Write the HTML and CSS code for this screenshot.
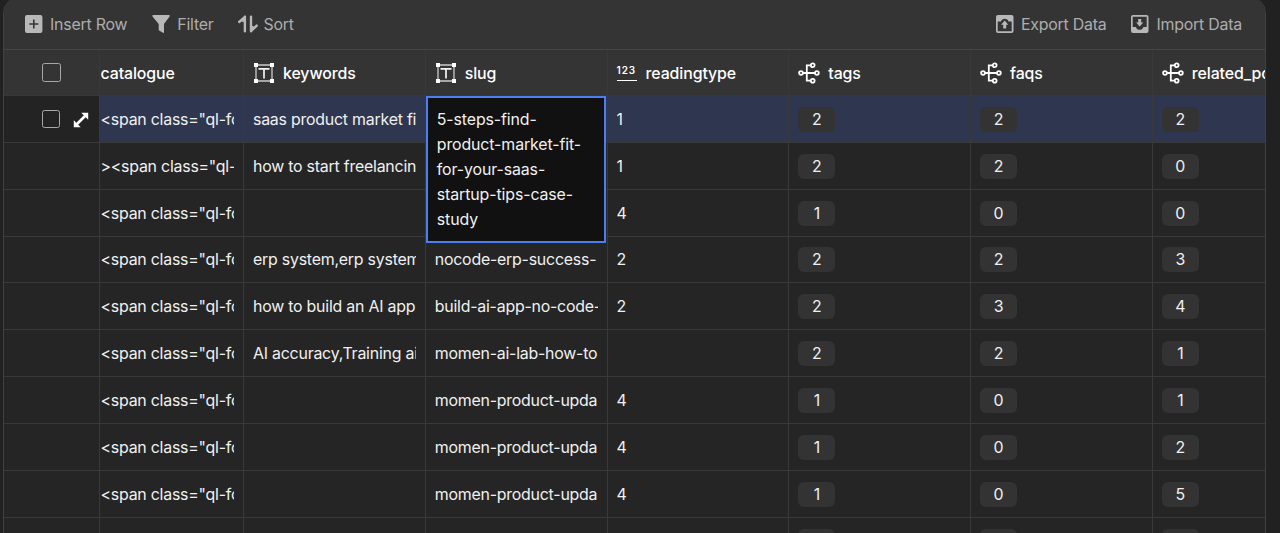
FILE: index.html
```html
<!DOCTYPE html>
<html lang="en">
<head>
<meta charset="utf-8">
<title>Data table</title>
<link rel="stylesheet" href="styles.css">
</head>
<body>
<svg class="defs" aria-hidden="true">
  <symbol id="text" viewBox="0 0 22 22"><path d="M3 3h16v16H3z" fill="none" stroke="#ccc" stroke-width="1.3"/><path d="M1 1h4v4H1zM17 1h4v4h-4zM1 17h4v4H1zM17 17h4v4h-4z" fill="#fff"/><path d="M5.500 6.800h11M11 6.800V16.500" fill="none" stroke="#f4f4f4" stroke-width="1.7"/></symbol>
  <symbol id="rel" viewBox="0 0 22 22"><g fill="none" stroke="#fff" stroke-width="1.8"><path d="M5 11h12M12.500 3.300H8.800v15.400h3.700"/><circle cx="3" cy="11" r="1.900"/><circle cx="18.900" cy="11" r="1.900"/><circle cx="14.700" cy="3.300" r="1.900"/><circle cx="14.700" cy="18.700" r="1.900"/></g></symbol>
</svg>
<main class="panel">
  <header class="toolbar">
    <div class="tool insert"><svg width="18" height="18" viewBox="0 0 18 18"><rect width="17.4" height="18" rx="2" fill="#b8b8b8"/><path d="M8.8 4.5v9M4.3 9h9" stroke="#343434" stroke-width="1.6"/></svg><span>Insert Row</span></div>
    <div class="tool filter"><svg width="18" height="20" viewBox="0 0 18 20"><path d="M1 1h16q1 0 .6 1.4L12 10v8.2q0 1.1-1 .5L6.700 16.300V10L.5 2.400Q0 1 1 1Z" fill="#b8b8b8"/></svg><span>Filter</span></div>
    <div class="tool sort"><svg width="20" height="18" viewBox="0 0 20 18"><path d="M1.200 7 6.900 1.800V16.200M6.900 1.800V6.500L4.500 5.500M13 1.800V16.200L18.700 10.600M13 16.200V11.500L15.500 12.500" fill="none" stroke="#b8b8b8" stroke-width="2.400" stroke-linecap="round" stroke-linejoin="round"/></svg><span>Sort</span></div>
    <div class="tool export"><svg width="18" height="18" viewBox="0 0 18 18"><path fill="#b8b8b8" fill-rule="evenodd" d="M2 0h13.500q2 0 2 2v14q0 2-2 2H2q-2 0-2-2V2Q0 0 2 0ZM1.700 6.500v9.700h14V6.500h-3.200a3.900 3.900 0 0 0-7.500 0Z"/><path d="m8.700 5.500 3.600 4.300h-2.100V13.500h-3V9.800H5.100Z" fill="#b8b8b8"/></svg><span>Export Data</span></div>
    <div class="tool import"><svg width="18" height="18" viewBox="0 0 18 18"><path fill="#b8b8b8" fill-rule="evenodd" d="M2 0h13.500q2 0 2 2v14q0 2-2 2H2q-2 0-2-2V2Q0 0 2 0ZM1.700 1.700V12h3.200a3.900 3.900 0 0 0 7.500 0h3.300V1.700Z"/><path d="m8.700 11.500 3.600-4h-2.100V4h-3v3.500H5.100Z" fill="#b8b8b8"/></svg><span>Import Data</span></div>
  </header>
  <section class="table" id="table">
    <div class="row head">
      <div class="cell select"><i class="box"></i></div>
      <div class="cell catalogue"><span class="clip">catalogue</span></div>
      <div class="cell"><svg class="type"><use href="#text"/></svg><span>keywords</span></div>
      <div class="cell"><svg class="type"><use href="#text"/></svg><span>slug</span></div>
      <div class="cell"><span class="number">123</span><span>readingtype</span></div>
      <div class="cell"><svg class="type"><use href="#rel"/></svg><span>tags</span></div>
      <div class="cell"><svg class="type"><use href="#rel"/></svg><span>faqs</span></div>
      <div class="cell"><svg class="type"><use href="#rel"/></svg><span>related_posts</span></div>
    </div>
  </section>
</main>
<script src="table.js"></script>
</body>
</html>
```
FILE: table.js
```js
const span = '<span class="ql-font';
const rows = [
  [span, 'saas product market fi', '', '1', 2, 2, 2],
  ['><span class="ql-', 'how to start freelancin', '', '1', 2, 2, 0],
  [span, '', '', '4', 1, 0, 0],
  [span, 'erp system,erp system', 'nocode-erp-success-', '2', 2, 2, 3],
  [span, 'how to build an AI app', 'build-ai-app-no-code-', '2', 2, 3, 4],
  [span, 'AI accuracy,Training ai', 'momen-ai-lab-how-to', '', 2, 2, 1],
  [span, '', 'momen-product-upda', '4', 1, 0, 1],
  [span, '', 'momen-product-upda', '4', 1, 0, 2],
  [span, '', 'momen-product-upda', '4', 1, 0, 5],
  ['', '', '', '', '', '', '']
];

function make(tag, className, text) {
  const el = document.createElement(tag);
  el.className = className;
  if (text !== undefined) el.textContent = text;
  return el;
}

const table = document.getElementById('table');
rows.forEach((values, r) => {
  const row = make('div', r === 0 ? 'row active' : 'row');
  const select = make('div', 'cell select');
  if (r === 0) {
    select.append(make('i', 'box'));
    select.insertAdjacentHTML('beforeend', '<svg class="expand" viewBox="0 0 16 16"><path d="m3.500 12.500 9-9" stroke="#fff" stroke-width="2.600"/><path d="M8.300.8h6.900v6.900ZM.8 8.300v6.900h6.900Z" fill="#fff"/></svg>');
  }
  row.append(select);
  values.forEach((value, c) => {
    const cell = make('div', c === 0 ? 'cell catalogue' : 'cell');
    cell.append(make('span', c > 3 ? 'badge' : 'clip', value));
    if (r === 0 && c === 2) {
      cell.append(make('div', 'editor', '5-steps-find-product-market-fit-for-your-saas-startup-tips-case-study'));
    }
    row.append(cell);
  });
  table.append(row);
});
```
FILE: styles.css
```css
* { box-sizing: border-box; }
body {
  margin: 0;
  height: 533px;
  overflow: hidden;
  background: #212121;
  color: #f0f0f0;
  font: 15.9px/25px Inter, sans-serif;
  letter-spacing: -0.22px;
}
.defs { position: absolute; width: 0; height: 0; }
.panel {
  width: 1263px;
  height: 560px;
  margin: -3px 0 0 3px;
  border: 1.5px solid #414141;
  border-radius: 16px;
  overflow: hidden;
  background: #252525;
}
.toolbar {
  display: flex;
  align-items: center;
  height: 52px;
  padding: 3px 23px 2px 21px;
  background: #343434;
  border-bottom: 1.5px solid #454545;
  color: #adadad;
}
.tool { display: flex; align-items: center; gap: 7px; white-space: nowrap; }
.tool svg { flex: none; }
.filter { margin-left: 25px; }
.sort { margin-left: 24px; gap: 6px; }
.export { margin-left: auto; }
.import { margin-left: 25px; }
.row {
  display: grid;
  grid-template-columns: 96px 144px repeat(6, 181.75px);
  height: 46.85px;
}
.cell {
  position: relative;
  display: flex;
  align-items: center;
  min-width: 0;
  padding: 1px 9px 0;
  border-right: 1px solid #393939;
  border-bottom: 1px solid #393939;
  white-space: nowrap;
}
.head { height: 46px; background: #343434; color: #fff; font-weight: 500; letter-spacing: -0.1px; }
.head .cell { gap: 8px; border-bottom-color: #383838; }
.active .cell { background: #2f364f; }
.row .select { padding: 0 0 0 38px; }
.active .select { background: #232323; }
.row .catalogue { padding-left: 0.5px; }
.clip { flex: 1; min-width: 0; overflow: hidden; }
.box { width: 18px; height: 18px; border: 1.5px solid #a8a8a8; border-radius: 2.5px; }
.head .box { width: 19px; height: 19px; }
.expand { width: 16px; height: 16px; margin: 3px 0 0 13px; }
.type { width: 22px; height: 22px; flex: none; }
.number {
  width: 20px;
  height: 15px;
  margin: 0 1px 0 0;
  border-bottom: 1.5px solid #fff;
  font-size: 10px;
  line-height: 8px;
  font-weight: 600;
  letter-spacing: 0.9px;
}
.badge {
  width: 37px;
  height: 25px;
  border-radius: 6px;
  background: #333;
  text-align: center;
}
.editor {
  position: absolute;
  z-index: 2;
  top: 0;
  left: 0;
  width: 180px;
  height: 147px;
  padding: 9px;
  border: 2px solid #4c7ef3;
  background: #111;
  letter-spacing: -0.1px;
  white-space: normal;
}
```
